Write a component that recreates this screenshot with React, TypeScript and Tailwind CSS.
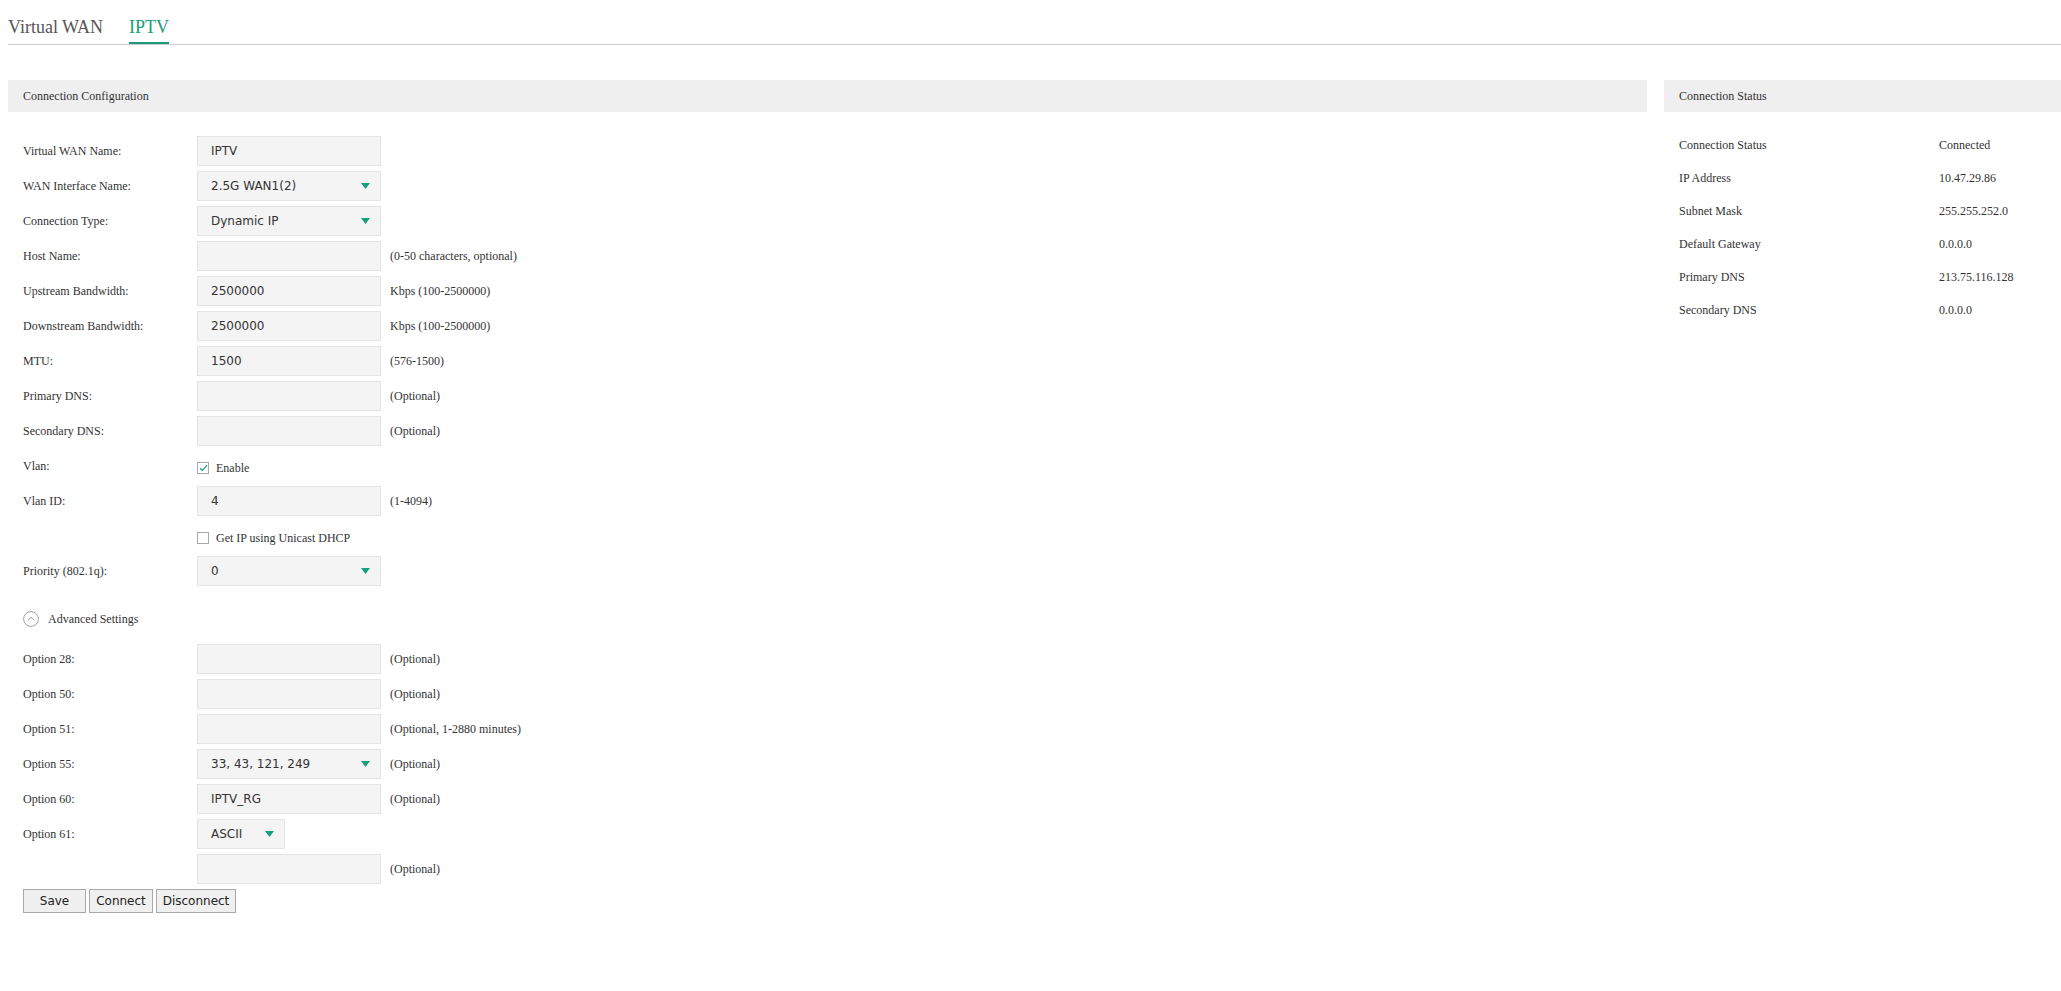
import React from "react";

const serif = { fontFamily: '"Liberation Serif", "Times New Roman", serif' };
const sans = { fontFamily: '"DejaVu Sans", Verdana, sans-serif' };

function Tri() {
  return (
    <svg width="9" height="6" viewBox="0 0 9 6" className="block">
      <polygon points="0,0 9,0 4.5,6" fill="#15a07a" />
    </svg>
  );
}

function Input({ value = "", w = "w-[184px]" }: { value?: string; w?: string }) {
  return (
    <div
      className={`${w} h-[30px] bg-[#f4f4f4] border border-[#e4e4e4] flex items-center pl-[13px] text-[12px] text-[#333]`}
      style={sans}
    >
      {value}
    </div>
  );
}

function Select({ value, w = "w-[184px]" }: { value: string; w?: string }) {
  return (
    <div
      className={`${w} h-[30px] bg-[#f4f4f4] border border-[#e4e4e4] flex items-center justify-between pl-[13px] pr-[10px] text-[12px] text-[#333]`}
      style={sans}
    >
      <span>{value}</span>
      <Tri />
    </div>
  );
}

function Check({ checked }: { checked?: boolean }) {
  return (
    <span className="w-[12px] h-[12px] border border-[#a8a8a8] bg-white flex items-center justify-center">
      {checked && (
        <svg width="9" height="8" viewBox="0 0 9 8">
          <polyline points="1,4.2 3.4,6.5 8,1.2" fill="none" stroke="#15a07a" strokeWidth="1.2" />
        </svg>
      )}
    </span>
  );
}

function Row({
  label,
  children,
  hint,
}: {
  label?: string;
  children: React.ReactNode;
  hint?: string;
}) {
  return (
    <div className="flex items-center h-[30px] mb-[5px]">
      <div className="w-[189px] shrink-0 pl-[15px] text-[12px] text-[#333]" style={serif}>
        {label}
      </div>
      {children}
      {hint && (
        <div className="ml-[9px] text-[12px] text-[#333]" style={serif}>
          {hint}
        </div>
      )}
    </div>
  );
}

function CheckRow({ label, text, checked }: { label?: string; text: string; checked?: boolean }) {
  return (
    <div className="flex items-center h-[30px] mb-[5px]">
      <div className="w-[189px] shrink-0 pl-[15px] text-[12px] text-[#333]" style={serif}>
        {label}
      </div>
      <div className="flex items-center gap-[7px] mt-[3px]">
        <Check checked={checked} />
        <span className="text-[12px] text-[#333]" style={serif}>
          {text}
        </span>
      </div>
    </div>
  );
}

const status: [string, string][] = [
  ["Connection Status", "Connected"],
  ["IP Address", "10.47.29.86"],
  ["Subnet Mask", "255.255.252.0"],
  ["Default Gateway", "0.0.0.0"],
  ["Primary DNS", "213.75.116.128"],
  ["Secondary DNS", "0.0.0.0"],
];

export default function App() {
  return (
    <div className="w-[2061px] min-h-[991px] bg-white pl-[8px]" style={serif}>
      {/* tabs */}
      <div className="flex h-[45px] border-b border-[#cccccc] gap-[26px]">
        <div className="pt-[17px] leading-[20px] text-[18px] text-[#555]">Virtual WAN</div>
        <div className="pt-[17px] leading-[20px] pb-[5px] text-[18px] text-[#1a9c79] border-b-2 border-[#1a9c79] h-[44px]">
          IPTV
        </div>
      </div>

      <div className="flex gap-[17px] mt-[35px]">
        {/* config */}
        <div className="flex-1">
          <div className="h-[32px] bg-[#efefef] flex items-center pl-[15px] text-[12px] text-[#333]">
            Connection Configuration
          </div>
          <div className="pt-[24px]">
            <Row label="Virtual WAN Name:">
              <Input value="IPTV" />
            </Row>
            <Row label="WAN Interface Name:">
              <Select value="2.5G WAN1(2)" />
            </Row>
            <Row label="Connection Type:">
              <Select value="Dynamic IP" />
            </Row>
            <Row label="Host Name:" hint="(0-50 characters, optional)">
              <Input />
            </Row>
            <Row label="Upstream Bandwidth:" hint="Kbps (100-2500000)">
              <Input value="2500000" />
            </Row>
            <Row label="Downstream Bandwidth:" hint="Kbps (100-2500000)">
              <Input value="2500000" />
            </Row>
            <Row label="MTU:" hint="(576-1500)">
              <Input value="1500" />
            </Row>
            <Row label="Primary DNS:" hint="(Optional)">
              <Input />
            </Row>
            <Row label="Secondary DNS:" hint="(Optional)">
              <Input />
            </Row>
            <CheckRow label="Vlan:" text="Enable" checked />
            <Row label="Vlan ID:" hint="(1-4094)">
              <Input value="4" />
            </Row>
            <CheckRow text="Get IP using Unicast DHCP" />
            <Row label="Priority (802.1q):">
              <Select value="0" />
            </Row>

            <div className="flex items-center h-[30px] mt-[18px] mb-[10px] pl-[15px] gap-[9px]">
              <svg width="16" height="16" viewBox="0 0 16 16" className="block">
                <circle cx="8" cy="8" r="7.4" fill="none" stroke="#a0a0a0" strokeWidth="1" />
                <polyline points="4.8,9.3 8,6.2 11.2,9.3" fill="none" stroke="#a0a0a0" strokeWidth="1" />
              </svg>
              <span className="text-[12px] text-[#333]">Advanced Settings</span>
            </div>

            <Row label="Option 28:" hint="(Optional)">
              <Input />
            </Row>
            <Row label="Option 50:" hint="(Optional)">
              <Input />
            </Row>
            <Row label="Option 51:" hint="(Optional, 1-2880 minutes)">
              <Input />
            </Row>
            <Row label="Option 55:" hint="(Optional)">
              <Select value="33, 43, 121, 249" />
            </Row>
            <Row label="Option 60:" hint="(Optional)">
              <Input value="IPTV_RG" />
            </Row>
            <Row label="Option 61:">
              <Select value="ASCII" w="w-[88px]" />
            </Row>
            <Row hint="(Optional)">
              <Input />
            </Row>

            <div className="flex gap-[3px] pl-[15px] mt-[5px]" style={sans}>
              <button className="w-[63px] h-[24px] bg-[#f0f0f0] border border-[#a9a9a9] text-[12px] text-[#222]">
                Save
              </button>
              <button className="w-[64px] h-[24px] bg-[#f0f0f0] border border-[#a9a9a9] text-[12px] text-[#222]">
                Connect
              </button>
              <button className="w-[80px] h-[24px] bg-[#f0f0f0] border border-[#a9a9a9] text-[12px] text-[#222]">
                Disconnect
              </button>
            </div>
          </div>
        </div>

        {/* status */}
        <div className="w-[397px]">
          <div className="h-[32px] bg-[#efefef] flex items-center pl-[15px] text-[12px] text-[#333]">
            Connection Status
          </div>
          <div className="pt-[16px]">
            {status.map(([k, v]) => (
              <div key={k} className="flex items-center h-[33px] pl-[15px] text-[12px] text-[#333]">
                <div className="w-[260px]">{k}</div>
                <div>{v}</div>
              </div>
            ))}
          </div>
        </div>
      </div>
    </div>
  );
}
